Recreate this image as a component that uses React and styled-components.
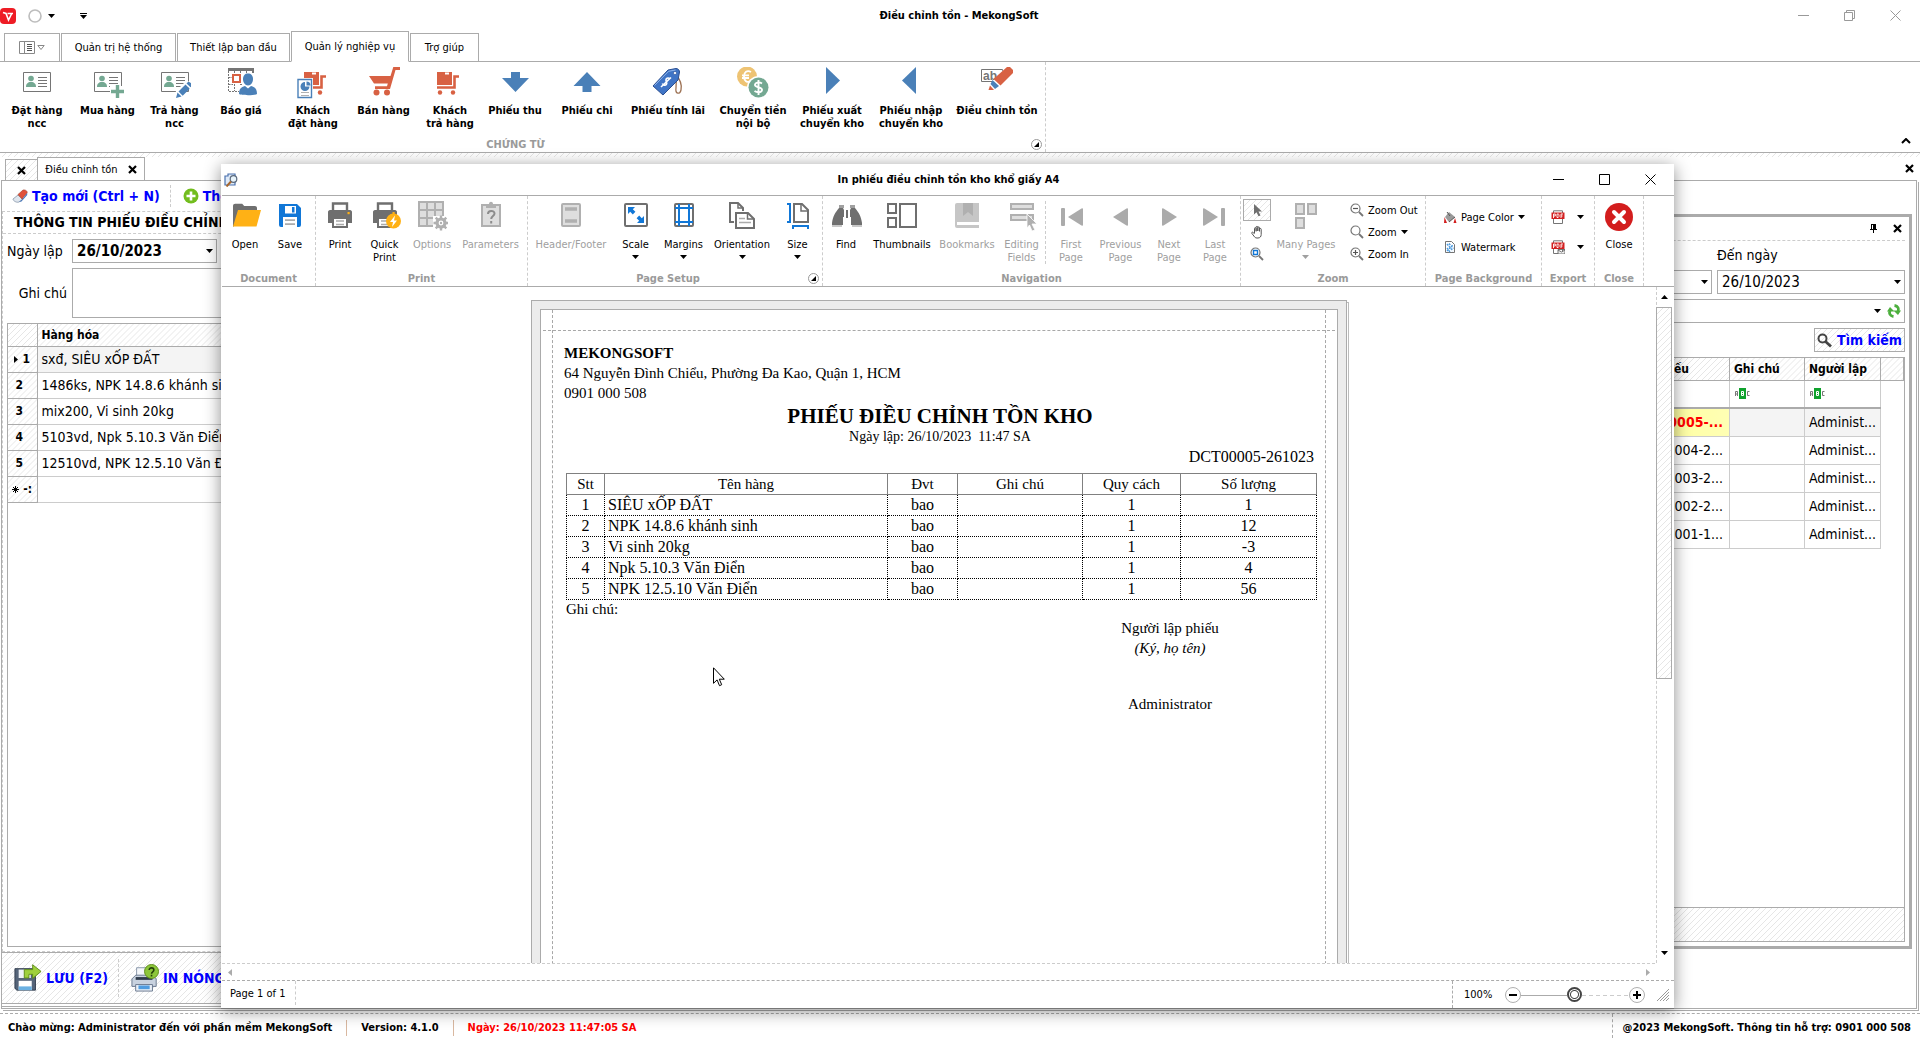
import React from 'react';
import styled, { createGlobalStyle, css } from 'styled-components';

const UI_FONT = "'DejaVu Sans Condensed', 'Noto Sans', sans-serif";
const DOC_FONT = "'Liberation Serif', 'Times New Roman', serif";
const LINE = '#ababab';
const DASH = '#cccccc';
const BLUE = '#4a80b8';
const GREEN = '#74a892';
const RED = '#d86143';
const GREY = '#757575';
const MUTED = '#b0b0b0';
const ORANGE = '#ffb115';
const AZURE = '#1177d7';

const hatch = css`
  background-image: linear-gradient(
    135deg,
    transparent 44%,
    #e6e6e6 44% 56%,
    transparent 56%
  );
  background-size: 6px 6px;
`;

const GlobalStyle = createGlobalStyle`
  * {
    box-sizing: border-box;
  }

  body {
    margin: 0;
    background: #fff;
    color: #000;
    font-family: ${UI_FONT};
    font-size: 11px;
  }

  button,
  input,
  textarea {
    font: inherit;
    color: inherit;
    background: none;
    border: 0;
    padding: 0;
    margin: 0;
  }

  svg {
    display: block;
    flex: none;
  }
`;

/* ---------- icons ---------- */

const Svg = ({ size = 32, w, h, box, children }) => (
  <svg
    width={w || size}
    height={h || size}
    viewBox={box ? `0 0 ${box} ${box}` : `0 0 ${w || size} ${h || size}`}
    fill='none'
    aria-hidden='true'
  >
    {children}
  </svg>
);

const Caret = ({ color = '#000' }) => (
  <Svg w={7} h={4}>
    <path d='M0 0h7L3.500 4z' fill={color} />
  </Svg>
);

const CardShape = () => (
  <>
    <path d='M2.500 5.500h27v19h-27z' fill='#fff' stroke={GREY} />
    <circle cx='10' cy='11.500' r='2.800' fill={GREEN} />
    <path d='M5 20c0-3.500 2-4.500 3.500-5h3c1.500.5 3.500 1.500 3.500 5z' fill={GREEN} />
    <path d='M17 10.500h9M17 13.500h9M17 16.500h9M17 19.500h9' stroke={GREY} />
  </>
);

const CardIcon = () => (
  <Svg>
    <CardShape />
  </Svg>
);

const CardAddIcon = () => (
  <Svg>
    <CardShape />
    <path d='M18 19h14v12H18z' fill='#fff' />
    <path d='M25.500 18v13M19 24.500h13' stroke={GREEN} strokeWidth='3.400' />
  </Svg>
);

const CardEditIcon = () => (
  <Svg>
    <CardShape />
    <path d='M15 32l2-8L28 13l5 5z' fill='#fff' />
    <path d='M17 31l1.500-5.500 4 4zM19.500 24.500l7-7 4.200 4.200-7 7zM27.500 16.500l1.200-1.200c1-1 2.500 0 3.200.8s1.400 2 .6 3l-1 1.200z' fill={BLUE} />
  </Svg>
);

const QuoteIcon = () => (
  <Svg>
    <path d='M3 1h26v5h-2V4H3z' fill={GREY} />
    <path d='M3.500 4v20.500H14M9.500 4v3M15.500 4v3M21.500 4v3M3.500 10.500H8M3.500 17.500H8M9.500 17v7M15 17.500h3' stroke={GREY} strokeDasharray='2 1' />
    <path d='M8 8h7v7H8z' stroke={RED} strokeWidth='2' />
    <path d='M18 12c0-3.500 2-5.500 5-5.500s5 2 5 5.500-2 6.500-5 6.500-5-3-5-6.500z' fill={BLUE} />
    <path d='M14 27c0-5 2-7 6-8l3 2.500 3-2.500c4 1 6 3 6 8-2 1.500-16 1.500-18 0z' fill={BLUE} />
  </Svg>
);

const TrolleyShape = () => (
  <>
    <path d='M3 5h15v13H3z' fill={RED} />
    <path d='M11 5.500h4v2h-4z' fill='#fff' />
    <path d='M3 20.500h17.500V9.500H25' stroke={RED} strokeWidth='2.600' />
    <circle cx='6' cy='25.500' r='2.200' fill={RED} />
    <circle cx='19' cy='25.500' r='2.200' fill={RED} />
  </>
);

const TrolleyIcon = () => (
  <Svg>
    <TrolleyShape />
  </Svg>
);

const OrderIcon = () => (
  <Svg>
    <g transform='translate(4 0)'>
      <TrolleyShape />
    </g>
    <path d='M0 11h16v21H0z' fill='#fff' />
    <path d='M1 12.500h13.500v18H1z' fill='#fff' stroke={BLUE} strokeWidth='1.400' />
    <path d='M8 15a4.500 4.500 0 1 0 4.500 4.500H8z' fill={BLUE} />
    <path d='M9.500 14.500v4h4a4 4 0 0 0-4-4z' fill={BLUE} />
    <path d='M4 25.500h8M4 28.500h8' stroke={MUTED} />
  </Svg>
);

const CartIcon = () => (
  <Svg>
    <path d='M1 9h21.500L25.300 0H32v3h-4.500L22 22H7v-2.800h12l.8-2.700H6z' fill={RED} />
    <circle cx='8.500' cy='25.500' r='3' fill={RED} />
    <circle cx='19' cy='25.500' r='3' fill={RED} />
  </Svg>
);

const ArrowIcon = ({ d }) => (
  <Svg>
    <path d={d} fill={BLUE} />
  </Svg>
);

const TagIcon = () => (
  <Svg>
    <path d='M23 7c5 5 7 11 6 16s-6 4-5-2 0-9-1-14z' stroke='#9d7254' strokeWidth='1.300' />
    <path d='M1 19L16 3l8-1.500c2 0 3.500 1.500 3.500 3.500L26 13 11 28z' fill='#3f74c5' stroke='#2b4f92' />
    <path d='M2.500 18.500L16.500 4.300l7-1.300' stroke='#8fb4ea' />
    <circle cx='23' cy='6' r='1.600' fill='#fff' stroke='#2b4f92' strokeWidth='.6' />
    <path d='M18 12c-2-2-4.500-.5-4 1.500s1.500 2.500.3 4-3.300.5-4-1M19 10.500L9 20' stroke='#fff' strokeWidth='1.600' />
  </Svg>
);

const CoinsIcon = () => (
  <Svg>
    <circle cx='10' cy='9.500' r='10' fill='#eec373' />
    <path d='M14 5c-4-2.500-7 .5-7 4.500s3 7 7 4.500M5 8.300h7M5 11h7' stroke='#fff' strokeWidth='1.800' />
    <circle cx='21.500' cy='20.500' r='11.500' fill='#fff' />
    <circle cx='21.500' cy='20.500' r='10' fill={GREEN} />
    <path d='M25 16.500c-3-2-7-1-7 1.500s7 2 7 4.800-4.500 3.200-7.500 1.200M21.500 13v15' stroke='#fff' strokeWidth='1.900' />
  </Svg>
);

const MarkerIcon = () => (
  <Svg>
    <path d='M.5 2.500h21v12H.5z' stroke={GREY} />
    <text x='2' y='12.500' fontSize='12' fill={GREY} fontFamily='Liberation Sans'>ab</text>
    <path d='M12 14L25 0h7v6L18 22h-6z' fill='#fff' />
    <path d='M26 0h3l3 3v3L19.500 18.500l-7-6.500z' fill={RED} />
    <path d='M11.500 13l6.500 6-4 3-4.500-5z' fill={BLUE} />
    <path d='M9 18.500l4 4.500H7.500z' fill={RED} />
  </Svg>
);

const OpenIcon = () => (
  <Svg>
    <path d='M4 5c0-1.500 1-2.200 2.200-2.200h7l2 2.200H26c1 0 2 .8 2 2v2H10L6 24l-2 2z' fill='#6f6f6f' />
    <path d='M9 9h23l-4.500 16.500H4z' fill={ORANGE} />
  </Svg>
);

const SaveIcon = () => (
  <Svg>
    <path d='M5 3h18l4 4v17a2 2 0 0 1-2 2h-2V16H9v10H7a2 2 0 0 1-2-2z' fill={AZURE} />
    <path d='M11 5h11v7.500H11z' fill='#fff' />
    <path d='M18 6h2.500v5.500H18z' fill={AZURE} />
    <path d='M11 19.200h10M11 23.200h10' stroke='#ababab' strokeWidth='1.800' />
  </Svg>
);

const PrinterShape = () => (
  <>
    <path d='M9 11V2.500h14V11' stroke='#6f6f6f' strokeWidth='2.400' />
    <path d='M6 9h20c1.200 0 2 1 2 2v11h-4v-6H8v6H4V11c0-1 .8-2 2-2z' fill='#6f6f6f' />
    <path d='M9 17h14v9H9z' fill='#fff' stroke='#6f6f6f' strokeWidth='2' />
    <path d='M12 20h8M12 23.500h8' stroke='#ababab' strokeWidth='1.400' />
    <path d='M23.500 11h2.200v2.200h-2.200z' fill={ORANGE} />
  </>
);

const PrinterIcon = () => (
  <Svg>
    <PrinterShape />
  </Svg>
);

const QuickPrintIcon = () => (
  <Svg>
    <PrinterShape />
    <circle cx='24.500' cy='20' r='7.500' fill={ORANGE} />
    <path d='M26 14.500l-5 6.500h3l-1 5 5-6.500h-3z' fill='#fff' />
  </Svg>
);

const OptionsIcon = () => (
  <Svg>
    <path d='M3 1h24v24H3z' fill='#dedede' />
    <path d='M3 1h24v24H3zM11 1v24M19 1v24M3 9h24M3 17h24' stroke={MUTED} strokeWidth='2' />
    <path d='M17 15h15v15H17z' fill='#fff' />
    <circle cx='25' cy='22' r='4' stroke={MUTED} strokeWidth='3.200' />
    <path d='M25 14.500v3M25 26.500v3M17.500 22h3M29.500 22h3M19.700 16.700l2 2M28.300 25.300l2 2M30.300 16.700l-2 2M21.700 25.300l-2 2' stroke={MUTED} strokeWidth='2.400' />
    <circle cx='25' cy='22' r='1.200' fill={MUTED} />
  </Svg>
);

const ParametersIcon = () => (
  <Svg>
    <path d='M7 4h18v21H7z' fill='#dedede' stroke={MUTED} strokeWidth='2' />
    <path d='M11 3h3c0-3 4-3 4 0h3v4H11z' fill={MUTED} />
    <path d='M13 13c0-4 6.500-4 6.500-.5 0 2.500-3.300 2.500-3.300 5.500M16.200 20v2.500' stroke='#8c8c8c' strokeWidth='2' />
  </Svg>
);

const HeaderFooterIcon = () => (
  <Svg>
    <rect x='7' y='3' width='18' height='22' rx='1' fill='#dedede' stroke={MUTED} strokeWidth='2' />
    <path d='M10 8h12M10 20h12' stroke={MUTED} strokeWidth='3.600' />
  </Svg>
);

const ScaleIcon = () => (
  <Svg>
    <rect x='5' y='3' width='22' height='22' rx='1' stroke='#6f6f6f' strokeWidth='2' />
    <path d='M8 6h7l-2.200 2.200 2.600 2.600-2.600 2.600-2.600-2.600L8 13zM24 22h-7l2.200-2.200-2.600-2.600 2.600-2.600 2.600 2.600L24 15z' fill={AZURE} />
  </Svg>
);

const MarginsIcon = () => (
  <Svg>
    <rect x='7' y='3' width='18' height='22' rx='1' stroke='#6f6f6f' strokeWidth='2' />
    <path d='M11 3v22M21 3v22M7 7h18M7 21h18' stroke={AZURE} strokeWidth='2' />
  </Svg>
);

const OrientationIcon = () => (
  <Svg>
    <path d='M8 21H4V2h8l5 5v3' stroke='#6f6f6f' strokeWidth='2' />
    <path d='M12 2v5h5' stroke='#6f6f6f' strokeWidth='1.500' />
    <path d='M10 12h12l6 6v9H10z' fill='#fff' stroke='#6f6f6f' strokeWidth='2' />
    <path d='M21.500 12.500V18H28' stroke='#6f6f6f' strokeWidth='1.500' />
    <path d='M13 17.500h6M13 21.500h12' stroke='#ababab' strokeWidth='1.600' />
  </Svg>
);

const SizeIcon = () => (
  <Svg>
    <path d='M5 3h3v18H5M11 28v-3h15v3' stroke={AZURE} strokeWidth='2' />
    <path d='M12 3h8l6 6v12H12z' stroke='#6f6f6f' strokeWidth='2' />
    <path d='M19 3v7h7' stroke='#6f6f6f' strokeWidth='1.500' />
  </Svg>
);

const FindIcon = () => (
  <Svg>
    <path d='M9 4h5v3H9zM20 4h5v3h-5z' fill='#a0a0a0' />
    <path d='M9 7h4l1 2v15H2v-2C3 15 5 12 9 7zM25 7h-4l-1 2v15h12v-2c-1-7-3-10-7-15z' fill='#6f6f6f' />
    <path d='M13 16h8v10h-8z' fill='#fff' />
    <path d='M16 9h2v8h-2z' fill='#6f6f6f' />
    <path d='M2 24h10v2H2zM22 24h10v2H22z' fill='#c8c8c8' />
  </Svg>
);

const ThumbnailsIcon = () => (
  <Svg>
    <path d='M2 3h8v9H2zM2 17h8v9H2zM14 3h16v23H14z' stroke='#6f6f6f' strokeWidth='2' />
  </Svg>
);

const BookmarksIcon = () => (
  <Svg>
    <path d='M6 2h22v25H6a2 2 0 0 1-2-2V4a2 2 0 0 1 2-2z' fill='#c6c6c6' />
    <path d='M12 2h10v13l-5-4-5 4z' fill={MUTED} />
    <path d='M6 21h22v3H6z' fill='#fff' />
  </Svg>
);

const FieldsIcon = () => (
  <Svg>
    <path d='M5 3h22v5H5zM5 14h22v5H5z' fill='#dedede' stroke={MUTED} strokeWidth='2' />
    <path d='M21 13l10 10h-5l3 6-3 1-2.500-6L21 27z' fill={MUTED} stroke='#fff' strokeWidth='.8' />
  </Svg>
);

const NavIcon = ({ flip, bar }) => (
  <Svg>
    <g transform={flip ? 'translate(32 0) scale(-1 1)' : undefined} fill='#ababab'>
      <path d={bar ? 'M28 8v16q0 1-1.500.5L13 16l13.500-8.500Q28 7 28 8z' : 'M23 8v16q0 1-1.500.5L8 16 21.500 7.500Q23 7 23 8z'} />
      {bar && <rect x='6' y='7' width='4' height='18' rx='1' />}
    </g>
  </Svg>
);

const ManyPagesIcon = () => (
  <Svg>
    <path d='M6 3h8v10H6zM18 3h8v10h-8zM6 17h8v10H6z' fill='#dedede' stroke={MUTED} strokeWidth='2' />
  </Svg>
);

const CloseCircleIcon = () => (
  <Svg>
    <circle cx='16' cy='16' r='14' fill='#d31d1d' />
    <path d='M11 11l10 10M21 11L11 21' stroke='#fff' strokeWidth='4' strokeLinecap='round' />
  </Svg>
);

const LensIcon = ({ sign, blue }) => (
  <Svg size={14}>
    <circle cx='5.500' cy='5.500' r='4.500' stroke={GREY} strokeWidth='1.200' />
    <path d='M9 9l4 4' stroke={GREY} strokeWidth='1.800' />
    {sign && <path d={sign} stroke='#555' strokeWidth='1.200' />}
    {blue && <path d='M3.500 3.500h4v4h-4z' stroke={AZURE} strokeWidth='1.400' />}
  </Svg>
);

const PointerIcon = () => (
  <Svg size={14}>
    <path d='M4 1l8 7.500H8.500l2 4-2 .8-2-4L4 11.500z' fill='#6f6f6f' />
  </Svg>
);

const HandIcon = () => (
  <Svg size={14}>
    <path d='M4.500 8V3.500a.8.8 0 0 1 1.600 0V6.500M6.100 6V2.200a.8.8 0 0 1 1.700 0V6M7.800 6V2.800a.8.8 0 0 1 1.700 0V6.500M9.500 6V4.300a.8.8 0 0 1 1.700 0V9.500c0 2-1.200 3.500-3.200 3.500H7c-1.500 0-2.300-.7-3-1.800L1.800 8.300c-.4-.9.700-1.600 1.400-.9L4.500 9' stroke='#555' strokeWidth='1' />
  </Svg>
);

const BucketIcon = () => (
  <Svg size={14}>
    <path d='M6 2l6 5-6 5-4-5z' fill='#9a9a9a' />
    <path d='M4 2l3 4' stroke='#555' />
    <path d='M1.500 7L4 13H1zM12 8l1.500 5h-3z' fill='#d32020' />
    <path d='M6 12l6-5' stroke='#555' />
  </Svg>
);

const WatermarkIcon = () => (
  <Svg size={14}>
    <path d='M2.500 1.500h6l3 3v8h-9z' fill='#fff' stroke={GREY} />
    <path d='M4 4l6 7M4 8l3 4M6 3.500l4.500 5M4 11l6-6' stroke='#4a9ae0' strokeDasharray='2 1' strokeWidth='1.400' />
  </Svg>
);

const PdfIcon = ({ mail }) => (
  <Svg size={14}>
    <path d='M2.500 13.500V.8h9v12.700z' fill='#fff' stroke={GREY} />
    <path d='M.5 2.500h13v6.500H.5z' fill='#d32020' />
    <path d='M2.500 8V4h1.800v2H2.500M6 4v3.500h1.200L8 6.500V4.500L7.200 4zM10 8V4h2M10 6h1.500' stroke='#fff' strokeWidth='.9' />
    {mail && <path d='M7 9.500h7v4.500H7zM7 10l3.500 2L14 10' fill='#eee' stroke='#666' strokeWidth='.9' />}
  </Svg>
);

const PreviewIcon = () => (
  <Svg size={14}>
    <path d='M1 3h3V1h7v11H1z' fill='#dfeaf8' stroke='#4a71ad' strokeWidth='1.200' />
    <circle cx='9.500' cy='6' r='3.300' fill='#e8f4fb' stroke='#5b6a7d' strokeWidth='1.200' />
    <path d='M7 8.500l-4.500 5' stroke='#a8672c' strokeWidth='2' />
  </Svg>
);

const BoldX = () => (
  <Svg size={9}>
    <path d='M1 1l7 7M8 1L1 8' stroke='#000' strokeWidth='2.200' />
  </Svg>
);

const EraserIcon = () => (
  <Svg size={16}>
    <path d='M1 11L6 7l5 4-4 3c-2 1-6-1-6-3z' fill='#dfe6ee' stroke='#8795a8' strokeWidth='.8' />
    <path d='M6 6.500L11 2c2-.6 5 1.200 4 3L10 11z' fill='#e0523a' stroke='#a33a28' strokeWidth='.6' />
    <path d='M10.500 11l4.700-6v2L9.500 13.500 7 14z' fill='#4776b8' />
  </Svg>
);

const AddIcon = () => (
  <Svg size={16}>
    <circle cx='8' cy='8' r='7.500' fill='#72bd1e' />
    <path d='M8 3.500v9M3.500 8h9' stroke='#fff' strokeWidth='2.600' />
  </Svg>
);

const FloppyArrowIcon = () => (
  <Svg size={28} box={30}>
    <path d='M1 5h20l2 3v20H3l-2-2z' fill='#56657a' stroke='#2f3b4c' />
    <path d='M5 6h13v9H5z' fill='#eef2f7' />
    <path d='M5 18h14v10H5z' fill='#fff' />
    <path d='M5 24h14v4H5z' fill='#6ab0e2' />
    <path d='M11 6h9V.8L29 8l-9 7.500V11h-4v4h-5z' fill='#9fd03c' stroke='#5c8b17' />
  </Svg>
);

const PrinterHelpIcon = () => (
  <Svg size={28} box={30}>
    <path d='M6 4h13v12H6z' fill='#f4f7fa' stroke='#8794a8' />
    <path d='M1 16l4-4h18l4 4v8H1z' fill='#c8d2df' stroke='#66758c' />
    <path d='M5 14h18v3H5z' fill='#2f3b4c' />
    <path d='M5 22h18v7H5z' fill='#e9eff6' stroke='#66758c' />
    <path d='M8 23h12v4H8z' fill='#4f9ce0' />
    <circle cx='22' cy='8' r='7.500' fill='#8cc63a' stroke='#5c8b17' />
    <path d='M19.500 6.500c0-3.200 5-3 5 0 0 2-2.500 1.800-2.500 4M22 11.500v1.800' stroke='#24400a' strokeWidth='1.700' />
  </Svg>
);

const RefreshIcon = () => (
  <Svg size={14}>
    <path d='M6.500 12.500C3 12 1.800 9.500 3 6.500M7.500 1.500c3.500.5 4.700 3 3.500 6' stroke='#4caf3d' strokeWidth='2.800' />
    <path d='M0 7.500L3 3l4.500 4.500zM6.500 6.500l7.500 0-3 4.500z' fill='#4caf3d' />
  </Svg>
);

const SearchIcon = () => (
  <Svg size={15}>
    <circle cx='5.500' cy='5.500' r='4' stroke='#444' strokeWidth='2' />
    <path d='M8.500 8.500l5.500 5' stroke='#444' strokeWidth='2.800' />
  </Svg>
);

const PinIcon = () => (
  <Svg size={9}>
    <path d='M2 0h5v5h1v1H5v3H4V6H1V5h1z' fill='#000' />
    <path d='M3 1h1v4H3z' fill='#fff' />
  </Svg>
);

const FilterIcon = () => (
  <Svg w={16} h={11}>
    <path d='M4 0h7v11H4z' fill='#0fa22d' />
    <path d='M6.500 3.500h2v4h-2zM6.500 5.500h2' stroke='#fff' />
    <path d='M.5 8V3.500h2V8M.5 6h2M14.500 3.500h-2v4h2' stroke='#777' />
  </Svg>
);

/* ---------- shared pieces ---------- */

const RibbonRow = styled.div`
  display: flex;
  height: 90px;
  border-bottom: 1px solid ${LINE};
  box-sizing: content-box;
`;

const Group = styled.section`
  display: flex;
  flex-direction: column;
  width: ${(p) => p.$width}px;
  border-right: 1px dashed ${DASH};
`;

const GroupItems = styled.div`
  display: flex;
  flex: 1;
  padding-top: ${(p) => p.$top || 5}px;
  padding-left: ${(p) => p.$left || 0}px;
`;

const Caption = styled.div`
  display: flex;
  align-items: center;
  height: 16px;
  color: #9a9a9a;
  font-weight: bold;
  white-space: nowrap;

  span {
    flex: 1;
    text-align: center;
  }
`;

const Launcher = styled.button`
  width: 11px;
  height: 11px;
  margin-right: 3px;
  border: 1px solid #999;
  border-radius: 50%;
  display: grid;
  place-items: center;
`;

const BigButton = styled.button`
  width: ${(p) => p.$width}px;
  display: flex;
  flex-direction: column;
  align-items: center;
  gap: 5px;
  line-height: 13px;
  white-space: pre-line;
  text-align: center;
  font-weight: ${(p) => (p.$bold ? 'bold' : 'normal')};

  &:disabled {
    color: #a0a0a0;
  }

  > span {
    display: flex;
    flex-direction: column;
    align-items: center;
    gap: 4px;
  }
`;

const SmallColumn = styled.div`
  display: flex;
  flex-direction: column;
  gap: ${(p) => p.$gap || 0}px;
  padding: ${(p) => p.$pad || 0};
`;

const SmallButton = styled.button`
  display: flex;
  align-items: center;
  gap: ${(p) => p.$gap || 4}px;
  height: 22px;
  white-space: nowrap;
`;

const ToolToggle = styled.button`
  width: 28px;
  height: 22px;
  display: grid;
  place-items: center;
  border: 1px solid ${(p) => (p.$active ? LINE : 'transparent')};
  ${(p) => p.$active && hatch}
`;

const Divider = styled.i`
  width: 0;
  height: ${(p) => p.$height}px;
  border-left: 1px dashed ${DASH};
`;

const RibbonGroup = ({ title, width, launcher, top, left, children }) => (
  <Group $width={width}>
    <GroupItems $top={top} $left={left}>
      {children}
    </GroupItems>
    <Caption>
      <span>{title}</span>
      {launcher && (
        <Launcher aria-label={`${title} settings`}>
          <Svg size={5}>
            <path d='M5 0v5H0z' fill='#000' />
          </Svg>
        </Launcher>
      )}
    </Caption>
  </Group>
);

const RibbonButton = ({ icon, label, width, disabled, menu, bold }) => (
  <BigButton $width={width} $bold={bold} disabled={disabled}>
    {icon}
    <span>
      {label}
      {menu && <Caret color={disabled ? '#a0a0a0' : '#000'} />}
    </span>
  </BigButton>
);

/* ---------- main window ---------- */

const Shell = styled.div`
  position: relative;
  display: flex;
  flex-direction: column;
  height: 100vh;
  overflow: hidden;
`;

const TitleBar = styled.header`
  display: grid;
  grid-template-columns: 1fr auto 1fr;
  align-items: center;
  height: 31px;
  padding-right: 2px;

  h1 {
    margin: 0;
    font-size: 11px;
  }
`;

const QuickAccess = styled.div`
  display: flex;
  align-items: center;
  gap: 12px;
`;

const Logo = styled.span`
  width: 16px;
  height: 16px;
  border-radius: 4px;
  background: #ee1c25;
  display: grid;
  place-items: center;
`;

const QuickButton = styled.button`
  display: flex;
  align-items: center;
  gap: 6px;
  padding-right: 13px;
`;

const WindowButtons = styled.div`
  display: flex;
  justify-content: flex-end;

  button {
    width: 46px;
    height: 28px;
    display: grid;
    place-items: center;
  }
`;

const TabStrip = styled.nav`
  display: flex;
  align-items: flex-end;
  gap: 1px;
  height: 31px;
  padding-left: 4px;
  box-shadow: inset 0 -1px 0 ${LINE};
`;

const Tab = styled.button`
  height: ${(p) => (p.$active ? 31 : 29)}px;
  width: ${(p) => p.$width}px;
  display: flex;
  align-items: center;
  justify-content: center;
  gap: 2px;
  border: 1px solid ${LINE};
  border-bottom-color: ${(p) => (p.$active ? '#fff' : LINE)};
  background: #fff;
  white-space: nowrap;
`;

const RibbonFill = styled.div`
  flex: 1;
  display: flex;
  align-items: flex-end;
  justify-content: flex-end;
  padding: 0 9px 8px 0;
`;

const DocTabs = styled.div`
  display: flex;
  align-items: flex-end;
  height: 27px;
  padding: 0 6px 0 5px;
  background-image: linear-gradient(transparent 4px, #fff 4px),
    linear-gradient(135deg, transparent 44%, #e6e6e6 44% 56%, transparent 56%);
  background-size: auto, 6px 6px;

  > button:last-child {
    margin: 0 0 7px auto;
  }
`;

const DocTab = styled.div`
  display: flex;
  align-items: center;
  justify-content: center;
  gap: 10px;
  width: ${(p) => p.$width}px;
  height: ${(p) => (p.$active ? 23 : 21)}px;
  border: 1px solid ${LINE};
  border-bottom: 0;
  border-right-width: ${(p) => (p.$active ? 1 : 0)}px;
  white-space: nowrap;
  ${(p) => !p.$active && hatch}
`;

const Workspace = styled.main`
  flex: 1;
  min-height: 0;
  display: flex;
  margin: 0 3px 4px 1px;
  border: 1px solid ${LINE};
  box-shadow: 1px 1px 0 #fff, 2px 2px 0 ${LINE};
`;

const FormPane = styled.section`
  flex: 1;
  min-width: 0;
  display: flex;
  flex-direction: column;
`;

const Actions = styled.div`
  display: flex;
  align-items: center;
  height: 30px;
  padding-left: 10px;
`;

const ActionButton = styled.button`
  display: flex;
  align-items: center;
  gap: 4px;
  color: #0000ff;
  font-size: 14px;
  font-weight: bold;
  white-space: nowrap;
  margin-right: 10px;

  & + i {
    margin-right: 12px;
  }
`;

const FormBody = styled.div`
  flex: 1;
  min-height: 0;
  display: flex;
  flex-direction: column;
  border: 1px dashed ${DASH};
  border-right: 0;
  padding: 0 0 4px 4px;
`;

const SectionTitle = styled.h2`
  margin: 0 0 5px -4px;
  padding-left: 11px;
  font-size: 14px;
  line-height: 21px;
  border-bottom: 1px dashed ${DASH};
  white-space: nowrap;
`;

const FormRow = styled.div`
  display: flex;
  align-items: center;
  margin-bottom: 5px;

  label {
    width: 65px;
    padding-right: 5px;
    text-align: ${(p) => (p.$right ? 'right' : 'left')};
    font-size: 14px;
    white-space: nowrap;
  }

  textarea {
    width: 600px;
    height: 50px;
    border: 1px solid ${LINE};
    resize: none;
  }
`;

const Combo = styled.div`
  display: flex;
  align-items: center;
  width: ${(p) => (p.$width ? `${p.$width}px` : 'auto')};
  flex: ${(p) => (p.$width ? 'none' : 1)};
  height: 24px;
  border: 1px solid ${LINE};
  padding: 0 3px 0 4px;
  gap: 6px;
  font-size: 15px;
  font-weight: ${(p) => (p.$bold ? 'bold' : 'normal')};

  input {
    flex: 1;
    min-width: 0;
    outline: 0;
  }
`;

const GridBox = styled.div`
  flex: 1;
  min-height: 0;
  border: 1px solid ${LINE};
  overflow: hidden;
`;

const Grid = styled.table`
  width: 100%;
  border-collapse: collapse;
  table-layout: fixed;
  font-size: 14px;

  th,
  td {
    height: ${(p) => p.$row}px;
    padding: 0 4px;
    text-align: left;
    white-space: nowrap;
    overflow: hidden;
    border-right: 1px solid ${DASH};
    border-bottom: 1px solid ${DASH};
  }

  th {
    border-color: ${LINE};
    ${hatch}
  }

  thead th {
    height: 22px;
    font-size: 12px;
  }

  td:first-of-type {
    text-align: ${(p) => (p.$clip ? 'right' : 'left')};
  }
`;

const RowHead = styled.th`
  font-size: 12px;

  span {
    display: flex;
    align-items: center;
    justify-content: center;
    gap: 4px;
    padding-right: ${(p) => (p.$current ? 0 : 6)}px;
  }
`;

const GridRow = styled.tr`
  td {
    background: ${(p) => (p.$current ? '#f4f4f4' : '#fff')};
  }
`;

const FilterRow = styled.tr`
  td {
    border-bottom: 2px solid ${LINE};
    padding-left: 5px;
  }
`;

const VoucherHead = styled.th`
  && {
    text-align: right;
    padding-right: 40px;
  }
`;

const VoucherCell = styled.td`
  && {
    padding-right: 6px;
    ${(p) =>
      p.$current &&
      css`
        background: linear-gradient(90deg, #ffff20, #ffffb4);
        color: #ff0000;
        font-weight: bold;
      `}
  }
`;

const ActionBar = styled.footer`
  display: flex;
  align-items: center;
  height: 52px;
  margin-bottom: 4px;
  padding-left: 12px;
  border-top: 1px solid ${LINE};
  border-bottom: 1px solid ${LINE};
  box-shadow: 0 2px 0 #fff, 0 3px 0 ${LINE};
  ${hatch}
`;

const SearchPane = styled.aside`
  width: 700px;
  margin: 33px 4px 59px 0;
  display: flex;
  flex-direction: column;
  border: 3px solid ${LINE};
  padding: 0 4px 4px;
`;

const PaneHead = styled.div`
  display: flex;
  align-items: center;
  justify-content: flex-end;
  gap: 15px;
  height: 24px;
  padding-right: 3px;
  border-bottom: 1px dashed ${DASH};
`;

const Fields = styled.div`
  display: grid;
  grid-template-columns: 1fr 188px;
  gap: 5px;
  margin-bottom: 5px;

  label {
    padding-top: 4px;
    font-size: 14px;
    line-height: 20px;
  }
`;

const FieldsWide = styled.div`
  display: flex;
  margin-bottom: 5px;
`;

const SearchButton = styled.button`
  align-self: flex-end;
  display: flex;
  align-items: center;
  justify-content: center;
  gap: 5px;
  width: 91px;
  height: 24px;
  margin-bottom: 5px;
  border: 1px solid ${LINE};
  color: #0000ff;
  font-size: 14px;
  font-weight: bold;
  ${hatch}
`;

const GridFooter = styled.div`
  height: 34px;
  border: 1px solid ${LINE};
  border-top: 0;
  ${hatch}
`;

const StatusBar = styled.footer`
  display: flex;
  align-items: center;
  justify-content: space-between;
  height: 25px;
  border-top: 1px dashed ${LINE};
  font-weight: bold;
  line-height: 16px;
  padding-left: 8px;

  div {
    display: flex;
    align-items: center;
    height: 24px;
    padding-top: 4px;
  }

  span + span {
    margin-left: 14px;
    padding-left: 14px;
    border-left: 1px solid #d9b8a0;
  }
`;

const Clock = styled.span`
  color: #ff0000;
`;

const Support = styled.div`
  padding: 0 9px 0 10px;
  border-left: 1px dashed ${LINE};
`;

/* ---------- print preview ---------- */

const Dialog = styled.section`
  position: absolute;
  top: 164px;
  bottom: 30px;
  left: 221px;
  right: 246px;
  display: flex;
  flex-direction: column;
  padding-left: 1px;
  background: #fff;
  box-shadow: 0 1px 0 #777, 0 3px 16px rgba(0, 0, 0, 0.45);
`;

const DialogTitle = styled.header`
  display: grid;
  grid-template-columns: 1fr auto 1fr;
  align-items: center;
  height: 32px;
  padding: 0 1px 0 2px;
  border-bottom: 1px solid ${LINE};

  h2 {
    margin: 0;
    font-size: 11px;
  }
`;

const Viewer = styled.div`
  flex: 1;
  min-height: 0;
  display: flex;
`;

const Canvas = styled.div`
  flex: 1;
  overflow: hidden;
  padding-top: 13px;
`;

const VScroll = styled.div`
  width: 18px;
  display: flex;
  flex-direction: column;
  align-items: stretch;
  border-left: 1px dashed ${DASH};
  padding-right: 2px;

  button {
    height: 20px;
    display: grid;
    place-items: center;
  }
`;

const Thumb = styled.div`
  height: 55%;
  margin-left: -1px;
  border: 1px solid ${LINE};
  ${hatch}
`;

const Spacer = styled.div`
  flex: 1;
`;

const HScroll = styled.div`
  display: flex;
  justify-content: space-between;
  align-items: center;
  height: 17px;
  margin-right: 19px;
  padding: 0 5px 0 6px;
  border-top: 1px dashed ${DASH};
`;

const PageFrame = styled.div`
  width: 816px;
  height: 1180px;
  margin: 0 auto;
  padding: 8px;
  background: #ececec;
  border: 1px solid ${LINE};
  box-shadow: 2px 2px 0 -1px #fff, 2px 2px 0 #bbb;
`;

const Paper = styled.article`
  position: relative;
  height: 100%;
  padding: 33px 21px 0 23px;
  background: #fff;
  border: 1px solid ${LINE};
  font-family: ${DOC_FONT};
  font-size: 15px;
  line-height: 20px;

  &::before,
  &::after {
    content: '';
    position: absolute;
    pointer-events: none;
  }

  &::before {
    inset: 0 11px;
    border: 1px dashed #a8a8a8;
    border-width: 0 1px;
  }

  &::after {
    left: 2px;
    right: 2px;
    top: 20px;
    border-top: 1px dashed #a8a8a8;
  }

  h3,
  p {
    margin: 0;
    font-size: inherit;
  }
`;

const ReportTitle = styled.h2`
  margin: 0;
  text-align: center;
  font-size: 21px;
  line-height: 26px;
`;

const ReportDate = styled.p`
  text-align: center;
  white-space: pre;

  && {
    font-size: 14px;
    line-height: 16px;
  }
`;

const VoucherNo = styled.p`
  && {
    margin: 0 2px 4px 0;
    text-align: right;
    font-size: 16px;
    line-height: 24px;
  }
`;

const ReportTable = styled.table`
  width: 751px;
  margin-left: 2px;
  border-collapse: collapse;
  table-layout: fixed;
  font-size: 16px;
  line-height: 18px;

  th,
  td {
    height: 21px;
    padding: 0 3px;
    text-align: center;
    font-weight: normal;
  }

  th {
    border: 1px solid #808080;
    font-size: 15px;
  }

  td {
    border: 1px dotted #000;
  }

  td:nth-child(2) {
    text-align: left;
  }
`;

const Note = styled.p`
  && {
    margin-left: 2px;
    line-height: 18px;
  }
`;

const Signature = styled.div`
  width: 200px;
  margin: 0 46px 0 auto;
  text-align: center;

  em {
    display: block;
    margin-bottom: 36px;
  }
`;

const DialogStatus = styled.footer`
  display: flex;
  align-items: stretch;
  height: 28px;
  border-top: 1px dashed ${LINE};
  line-height: 26px;

  > span {
    padding: 0 10px 0 8px;
  }
`;

const ZoomBox = styled.div`
  display: flex;
  align-items: center;
  border-left: 1px dashed ${LINE};
  padding: 0 5px 0 11px;

  label {
    width: 41px;
  }

  > svg {
    margin-left: 12px;
  }
`;

const RoundButton = styled.button`
  width: 16px;
  height: 16px;
  border: 1px solid ${MUTED};
  border-radius: 50%;
  display: grid;
  place-items: center;
`;

const ZoomSlider = styled.input`
  width: 108px;
  height: 16px;
  appearance: none;
  background: linear-gradient(${LINE}, ${LINE}) 0 8px / 46px 1px no-repeat,
    repeating-linear-gradient(90deg, ${DASH} 0 4px, transparent 4px 7px) 61px 8px /
      47px 1px no-repeat;

  &::-webkit-slider-thumb {
    appearance: none;
    width: 15px;
    height: 15px;
    border: 2px solid #444;
    border-radius: 50%;
    background: radial-gradient(#fff 3px, #444 4px, #fff 5px);
  }
`;

const MouseCursor = styled.div`
  position: absolute;
  left: 492px;
  top: 503px;
`;

const MAIN_BUTTONS = [
  { label: 'Đặt hàng\nncc', width: 64, icon: <CardIcon /> },
  { label: 'Mua hàng', width: 77, icon: <CardAddIcon /> },
  { label: 'Trả hàng\nncc', width: 57, icon: <CardEditIcon /> },
  { label: 'Báo giá', width: 76, icon: <QuoteIcon /> },
  { label: 'Khách\nđặt hàng', width: 68, icon: <OrderIcon /> },
  { label: 'Bán hàng', width: 73, icon: <CartIcon /> },
  { label: 'Khách\ntrả hàng', width: 60, icon: <TrolleyIcon /> },
  { label: 'Phiếu thu', width: 70, icon: <ArrowIcon d='M12 5h9v6h9L16.500 25 3 11h9z' /> },
  { label: 'Phiếu chi', width: 74, icon: <ArrowIcon d='M11.500 25h9v-6h9L16 5 2.500 19h9z' /> },
  { label: 'Phiếu tính lãi', width: 88, icon: <TagIcon /> },
  { label: 'Chuyển tiền\nnội bộ', width: 82, icon: <CoinsIcon /> },
  { label: 'Phiếu xuất\nchuyển kho', width: 76, icon: <ArrowIcon d='M10 0v27l14-13.500z' /> },
  { label: 'Phiếu nhập\nchuyển kho', width: 82, icon: <ArrowIcon d='M21 0v27L7 13.500z' /> },
  { label: 'Điều chỉnh tồn', width: 90, icon: <MarkerIcon /> },
];

const ITEMS = [
  'sxđ, SIÊU xỐP ĐẤT',
  '1486ks, NPK 14.8.6 khánh sinh',
  'mix200, Vi sinh 20kg',
  '5103vd, Npk 5.10.3 Văn Điển',
  '12510vd, NPK 12.5.10 Văn Điển',
];

const VOUCHERS = [
  'DCT00005-...',
  'DCT00004-2...',
  'DCT00003-2...',
  'DCT00002-2...',
  'DCT00001-1...',
];

const REPORT_ROWS = [
  ['SIÊU xỐP ĐẤT', '1'],
  ['NPK 14.8.6 khánh sinh', '12'],
  ['Vi sinh 20kg', '-3'],
  ['Npk 5.10.3 Văn Điển', '4'],
  ['NPK 12.5.10 Văn Điển', '56'],
];

const Report = () => (
  <PageFrame>
    <Paper>
      <h3>MEKONGSOFT</h3>
      <p>64 Nguyễn Đình Chiểu, Phường Đa Kao, Quận 1, HCM</p>
      <p>0901 000 508</p>
      <ReportTitle>PHIẾU ĐIỀU CHỈNH TỒN KHO</ReportTitle>
      <ReportDate>{'Ngày lập: 26/10/2023  11:47 SA'}</ReportDate>
      <VoucherNo>DCT00005-261023</VoucherNo>
      <ReportTable>
        <colgroup>
          <col width='38' />
          <col width='283' />
          <col width='70' />
          <col width='125' />
          <col width='98' />
          <col />
        </colgroup>
        <thead>
          <tr>
            <th>Stt</th>
            <th>Tên hàng</th>
            <th>Đvt</th>
            <th>Ghi chú</th>
            <th>Quy cách</th>
            <th>Số lượng</th>
          </tr>
        </thead>
        <tbody>
          {REPORT_ROWS.map(([name, qty], i) => (
            <tr key={name}>
              <td>{i + 1}</td>
              <td>{name}</td>
              <td>bao</td>
              <td></td>
              <td>1</td>
              <td>{qty}</td>
            </tr>
          ))}
        </tbody>
      </ReportTable>
      <Note>Ghi chú:</Note>
      <Signature>
        Người lập phiếu
        <em>(Ký, họ tên)</em>
        Administrator
      </Signature>
    </Paper>
  </PageFrame>
);

const PreviewRibbon = () => (
  <RibbonRow>
    <RibbonGroup title='Document' width={94}>
      <RibbonButton label='Open' width={46} icon={<OpenIcon />} />
      <RibbonButton label='Save' width={44} icon={<SaveIcon />} />
    </RibbonGroup>
    <RibbonGroup title='Print' width={212} left={2}>
      <RibbonButton label='Print' width={44} icon={<PrinterIcon />} />
      <RibbonButton label={'Quick\nPrint'} width={45} icon={<QuickPrintIcon />} />
      <RibbonButton label='Options' width={50} disabled icon={<OptionsIcon />} />
      <RibbonButton label='Parameters' width={67} disabled icon={<ParametersIcon />} />
    </RibbonGroup>
    <RibbonGroup title='Page Setup' width={295} left={2} launcher>
      <RibbonButton label='Header/Footer' width={82} disabled icon={<HeaderFooterIcon />} />
      <RibbonButton label='Scale' width={47} menu icon={<ScaleIcon />} />
      <RibbonButton label='Margins' width={49} menu icon={<MarginsIcon />} />
      <RibbonButton label='Orientation' width={68} menu icon={<OrientationIcon />} />
      <RibbonButton label='Size' width={43} menu icon={<SizeIcon />} />
    </RibbonGroup>
    <RibbonGroup title='Navigation' width={418} left={1}>
      <RibbonButton label='Find' width={44} icon={<FindIcon />} />
      <RibbonButton label='Thumbnails' width={68} icon={<ThumbnailsIcon />} />
      <RibbonButton label='Bookmarks' width={62} disabled icon={<BookmarksIcon />} />
      <RibbonButton label={'Editing\nFields'} width={47} disabled icon={<FieldsIcon />} />
      <Divider $height={63} />
      <RibbonButton label={'First\nPage'} width={50} disabled icon={<NavIcon bar />} />
      <RibbonButton label={'Previous\nPage'} width={49} disabled icon={<NavIcon />} />
      <RibbonButton label={'Next\nPage'} width={48} disabled icon={<NavIcon flip />} />
      <RibbonButton label={'Last\nPage'} width={44} disabled icon={<NavIcon bar flip />} />
    </RibbonGroup>
    <RibbonGroup title='Zoom' width={185} left={2} top={3}>
      <SmallColumn>
        <ToolToggle $active aria-label='Pointer'>
          <PointerIcon />
        </ToolToggle>
        <ToolToggle aria-label='Hand tool'>
          <HandIcon />
        </ToolToggle>
        <ToolToggle aria-label='Magnifier'>
          <LensIcon blue />
        </ToolToggle>
      </SmallColumn>
      <SmallColumn $pad='2px 0 0'>
        <RibbonButton label='Many Pages' width={70} menu disabled icon={<ManyPagesIcon />} />
      </SmallColumn>
      <SmallColumn $pad='0 0 0 9px'>
        <SmallButton>
          <LensIcon sign='M3 5.500h5' />
          Zoom Out
        </SmallButton>
        <SmallButton>
          <LensIcon />
          Zoom
          <Caret />
        </SmallButton>
        <SmallButton>
          <LensIcon sign='M3 5.500h5M5.500 3v5' />
          Zoom In
        </SmallButton>
      </SmallColumn>
    </RibbonGroup>
    <RibbonGroup title='Page Background' width={116} left={17} top={10}>
      <SmallColumn $gap={8}>
        <SmallButton>
          <BucketIcon />
          Page Color
          <Caret />
        </SmallButton>
        <SmallButton>
          <WatermarkIcon />
          Watermark
        </SmallButton>
      </SmallColumn>
    </RibbonGroup>
    <RibbonGroup title='Export' width={53} left={9} top={10}>
      <SmallColumn $gap={8}>
        <SmallButton $gap={12} aria-label='Export PDF'>
          <PdfIcon />
          <Caret />
        </SmallButton>
        <SmallButton $gap={12} aria-label='Send PDF'>
          <PdfIcon mail />
          <Caret />
        </SmallButton>
      </SmallColumn>
    </RibbonGroup>
    <RibbonGroup title='Close' width={49}>
      <RibbonButton label='Close' width={48} icon={<CloseCircleIcon />} />
    </RibbonGroup>
  </RibbonRow>
);

const PreviewDialog = () => (
  <Dialog>
    <DialogTitle>
      <PreviewIcon />
      <h2>In phiếu điều chỉnh tồn kho khổ giấy A4</h2>
      <WindowButtons>
        <button aria-label='Minimize'>
          <Svg size={11}>
            <path d='M0 5.500h11' stroke='#000' />
          </Svg>
        </button>
        <button aria-label='Maximize'>
          <Svg size={11}>
            <path d='M.5.5h10v10H.5z' stroke='#000' />
          </Svg>
        </button>
        <button aria-label='Close'>
          <Svg size={11}>
            <path d='M.5.5l10 10M10.500.5l-10 10' stroke='#000' />
          </Svg>
        </button>
      </WindowButtons>
    </DialogTitle>
    <PreviewRibbon />
    <Viewer>
      <Canvas>
        <Report />
      </Canvas>
      <VScroll>
        <button aria-label='Scroll up'>
          <Svg w={7} h={4}>
            <path d='M0 4h7L3.500 0z' fill='#000' />
          </Svg>
        </button>
        <Thumb />
        <Spacer />
        <button aria-label='Scroll down'>
          <Caret />
        </button>
      </VScroll>
    </Viewer>
    <HScroll>
      <Svg w={4} h={7}>
        <path d='M4 0v7L0 3.500z' fill={LINE} />
      </Svg>
      <Svg w={4} h={7}>
        <path d='M0 0v7l4-3.500z' fill={LINE} />
      </Svg>
    </HScroll>
    <DialogStatus>
      <span>Page 1 of 1</span>
      <Divider $height={24} />
      <Spacer />
      <ZoomBox>
        <label htmlFor='zoom'>100%</label>
        <RoundButton aria-label='Zoom out'>
          <Svg size={8}>
            <path d='M0 4h8' stroke='#000' strokeWidth='2' />
          </Svg>
        </RoundButton>
        <ZoomSlider id='zoom' type='range' defaultValue='49' />
        <RoundButton aria-label='Zoom in'>
          <Svg size={8}>
            <path d='M0 4h8M4 0v8' stroke='#000' strokeWidth='2' />
          </Svg>
        </RoundButton>
        <Svg size={12}>
          <path d='M0 12L12 0M3 12l9-9M6 12l6-6M9 12l3-3' stroke='#999' />
        </Svg>
      </ZoomBox>
    </DialogStatus>
    <MouseCursor>
      <Svg w={12} h={20}>
        <path d='M.5.8v15.500l3.600-3.400 2.400 5.800 2.200-1-2.400-5.500h5z' fill='#fff' stroke='#000' />
      </Svg>
    </MouseCursor>
  </Dialog>
);

const App = () => (
  <Shell>
    <GlobalStyle />
    <TitleBar>
      <QuickAccess>
        <Logo>
          <Svg size={12}>
            <path d='M1 2.500l3 1 2.500 6.500L9.500 4M5.500 3.500H11' stroke='#fff' strokeWidth='1.600' />
          </Svg>
        </Logo>
        <QuickButton aria-label='Style'>
          <Svg size={14}>
            <circle cx='7' cy='7' r='6' stroke='#bdbdbd' strokeWidth='1.600' />
          </Svg>
          <Caret />
        </QuickButton>
        <button aria-label='Customize'>
          <Svg w={7} h={6}>
            <path d='M0 0h7v1H0zM0 2h7L3.500 6z' fill='#000' />
          </Svg>
        </button>
      </QuickAccess>
      <h1>Điều chỉnh tồn - MekongSoft</h1>
      <WindowButtons>
        <button aria-label='Minimize'>
          <Svg size={11}>
            <path d='M0 5.500h11' stroke='#999' />
          </Svg>
        </button>
        <button aria-label='Restore'>
          <Svg size={11}>
            <path d='M.5 2.500h8v8h-8zM2.500 2.500v-2h8v8h-2' stroke='#999' />
          </Svg>
        </button>
        <button aria-label='Close'>
          <Svg size={11}>
            <path d='M.5.5l10 10M10.500.5l-10 10' stroke='#999' />
          </Svg>
        </button>
      </WindowButtons>
    </TitleBar>
    <TabStrip>
      <Tab $width={56} aria-label='File'>
        <Svg w={16} h={13}>
          <path d='M.5.5h15v12H.5zM5.500 0v13' stroke='#888' />
          <path d='M8 3.500h5M8 5.500h5M8 7.500h5M8 9.500h5' stroke='#555' />
        </Svg>
        <Svg w={8} h={5}>
          <path d='M.8.5h6.400L4 4.500z' stroke='#888' />
        </Svg>
      </Tab>
      <Tab $width={115}>Quản trị hệ thống</Tab>
      <Tab $width={113}>Thiết lập ban đầu</Tab>
      <Tab $width={118} $active>
        Quản lý nghiệp vụ
      </Tab>
      <Tab $width={69}>Trợ giúp</Tab>
    </TabStrip>
    <RibbonRow>
      <RibbonGroup title='CHỨNG TỪ' width={1046} left={5} launcher>
        {MAIN_BUTTONS.map((button) => (
          <RibbonButton key={button.label} {...button} bold />
        ))}
      </RibbonGroup>
      <RibbonFill>
        <button aria-label='Collapse ribbon'>
          <Svg w={10} h={6}>
            <path d='M1 5l4-4 4 4' stroke='#000' strokeWidth='2' />
          </Svg>
        </button>
      </RibbonFill>
    </RibbonRow>
    <DocTabs>
      <DocTab $width={32}>
        <BoldX />
      </DocTab>
      <DocTab $width={108} $active>
        Điều chỉnh tồn
        <BoldX />
      </DocTab>
      <button aria-label='Close document'>
        <BoldX />
      </button>
    </DocTabs>
    <Workspace>
      <FormPane>
        <Actions>
          <ActionButton>
            <EraserIcon />
            Tạo mới (Ctrl + N)
          </ActionButton>
          <Divider $height={22} />
          <ActionButton>
            <AddIcon />
            Thêm
          </ActionButton>
        </Actions>
        <FormBody>
          <SectionTitle>THÔNG TIN PHIẾU ĐIỀU CHỈNH</SectionTitle>
          <FormRow>
            <label htmlFor='created'>Ngày lập</label>
            <Combo $width={145} $bold>
              <input id='created' defaultValue='26/10/2023' />
              <Caret />
            </Combo>
          </FormRow>
          <FormRow $right>
            <label htmlFor='note'>Ghi chú</label>
            <textarea id='note' />
          </FormRow>
          <GridBox>
            <Grid $row={26}>
              <colgroup>
                <col width='29' />
                <col />
              </colgroup>
              <thead>
                <tr>
                  <th></th>
                  <th>Hàng hóa</th>
                </tr>
              </thead>
              <tbody>
                {ITEMS.map((item, i) => (
                  <GridRow key={item} $current={i === 0}>
                    <RowHead $current={i === 0}>
                      <span>
                        {i === 0 && (
                          <Svg w={4} h={7}>
                            <path d='M0 0v7l4-3.500z' fill='#000' />
                          </Svg>
                        )}
                        {i + 1}
                      </span>
                    </RowHead>
                    <td>{item}</td>
                  </GridRow>
                ))}
                <GridRow>
                  <RowHead $current>
                    <span>
                      <Svg size={7}>
                        <path d='M3.500 0v7M0 3.500h7M1 1l5 5M6 1L1 6' stroke='#000' />
                      </Svg>
                      -:
                    </span>
                  </RowHead>
                  <td></td>
                </GridRow>
              </tbody>
            </Grid>
          </GridBox>
        </FormBody>
        <ActionBar>
          <ActionButton>
            <FloppyArrowIcon />
            LƯU (F2)
          </ActionButton>
          <Divider $height={38} />
          <ActionButton>
            <PrinterHelpIcon />
            IN NÓNG
          </ActionButton>
        </ActionBar>
      </FormPane>
      <SearchPane>
        <PaneHead>
          <button aria-label='Pin'>
            <PinIcon />
          </button>
          <button aria-label='Close panel'>
            <BoldX />
          </button>
        </PaneHead>
        <Fields>
          <span />
          <label htmlFor='to'>Đến ngày</label>
          <Combo>
            <input aria-label='Từ ngày' />
            <Caret />
          </Combo>
          <Combo>
            <input id='to' defaultValue='26/10/2023' />
            <Caret />
          </Combo>
        </Fields>
        <FieldsWide>
          <Combo>
            <input aria-label='Người lập' />
            <Caret />
            <RefreshIcon />
          </Combo>
        </FieldsWide>
        <SearchButton>
          <SearchIcon />
          Tìm kiếm
        </SearchButton>
        <GridBox>
          <Grid $row={28} $clip>
            <colgroup>
              <col />
              <col width='75' />
              <col width='76' />
              <col width='23' />
            </colgroup>
            <thead>
              <tr>
                <VoucherHead>Số phiếu</VoucherHead>
                <th>Ghi chú</th>
                <th>Người lập</th>
                <th></th>
              </tr>
            </thead>
            <tbody>
              <FilterRow>
                <td></td>
                <td>
                  <FilterIcon />
                </td>
                <td>
                  <FilterIcon />
                </td>
              </FilterRow>
              {VOUCHERS.map((voucher, i) => (
                <GridRow key={voucher} $current={i === 0}>
                  <VoucherCell $current={i === 0}>{voucher}</VoucherCell>
                  <td></td>
                  <td>Administ...</td>
                </GridRow>
              ))}
            </tbody>
          </Grid>
        </GridBox>
        <GridFooter />
      </SearchPane>
    </Workspace>
    <StatusBar>
      <div>
        <span>Chào mừng: Administrator đến với phần mềm MekongSoft</span>
        <span>Version: 4.1.0</span>
        <Clock>Ngày: 26/10/2023 11:47:05 SA</Clock>
      </div>
      <Support>@2023 MekongSoft. Thông tin hỗ trợ: 0901 000 508</Support>
    </StatusBar>
    <PreviewDialog />
  </Shell>
);

export default App;
